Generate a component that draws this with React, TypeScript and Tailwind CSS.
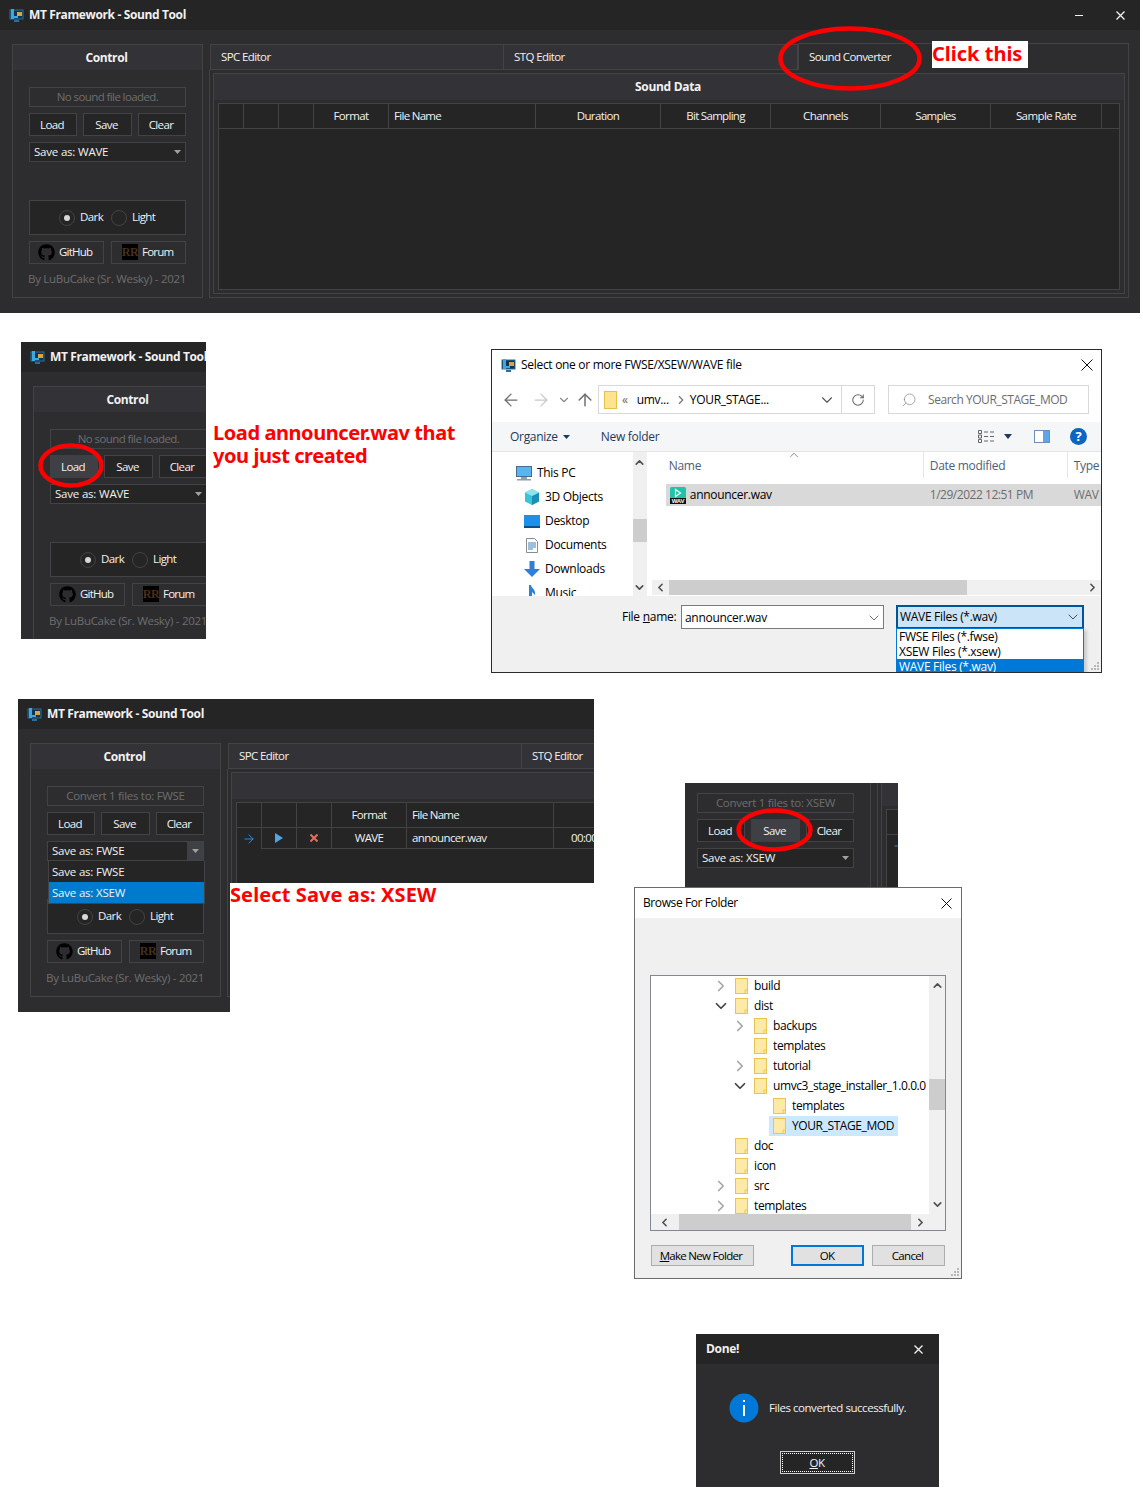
import React from "react";
import { FaGithub } from "react-icons/fa";
import { ArrowLeft, ArrowRight, ArrowUp, ChevronDown, ChevronRight, ChevronUp, ChevronLeft, RotateCw, Search } from "lucide-react";

const Caret = () => (
  <svg width="7" height="4" viewBox="0 0 7 4" className="shrink-0"><path d="M0 0h7L3.5 4z" fill="#a0a0a0" /></svg>
);

const XIcon = ({ s, c = "#f1f1f1", w = 1.3 }: { s: number; c?: string; w?: number }) => (
  <svg width={s} height={s} viewBox={`0 0 ${s} ${s}`} className="shrink-0">
    <path d={`M0.5 0.5L${s - 0.5} ${s - 0.5}M${s - 0.5} 0.5L0.5 ${s - 0.5}`} stroke={c} strokeWidth={w} fill="none" />
  </svg>
);

const AppIcon = ({ size = 15 }: { size?: number }) => (
  <svg width={size} height={size} viewBox="0 0 15 15" className="shrink-0">
    <rect x="1" y="2" width="13" height="9" fill="#16324f" stroke="#2a6f9e" />
    <rect x="2" y="1" width="3" height="10" fill="#3fa7e0" />
    <rect x="4" y="8" width="5" height="2" fill="#3fa7e0" />
    <rect x="8" y="4" width="5" height="4" fill="#d9a441" />
    <rect x="5" y="12" width="5" height="2" fill="#2a6f9e" />
  </svg>
);

const ForumIcon = () => (
  <span className="flex w-[16px] h-[16px] bg-black items-center justify-center text-[12px] leading-none tracking-[-0.5px] font-bold font-['Liberation_Serif',serif] text-[#4a3018] shrink-0">RR</span>
);

function Radio({ on }: { on?: boolean }) {
  return (
    <span className="flex w-[16px] h-[16px] rounded-full border border-[#434346] items-center justify-center shrink-0">
      {on && <span className="block w-[6px] h-[6px] rounded-full bg-[#d8d8d8]" />}
    </span>
  );
}

function Btn({ label, hover, w }: { label: string; hover?: boolean; w: string }) {
  return (
    <div className={`${w} h-[23px] flex items-center justify-center pr-[2px] border ${hover ? "bg-[#3f3f46] border-[#3f3f46]" : "bg-[#252526] border-[#434346]"}`}>{label}</div>
  );
}

type ToolProps = {
  label: string;
  labelCls?: string;
  combo: string;
  hover?: "load" | "save";
  open?: boolean;
  rows?: boolean;
};

const columns = [
  { w: "w-[25px]", t: "", c: "" },
  { w: "w-[35px]", t: "", c: "" },
  { w: "w-[35px]", t: "", c: "" },
  { w: "w-[75px]", t: "Format", c: "justify-center" },
  { w: "w-[147px]", t: "File Name", c: "pl-[5px] tracking-[-0.7px]" },
  { w: "w-[125px]", t: "Duration", c: "justify-center" },
  { w: "w-[110px]", t: "Bit Sampling", c: "justify-center tracking-[-0.7px]" },
  { w: "w-[110px]", t: "Channels", c: "justify-center" },
  { w: "w-[110px]", t: "Samples", c: "justify-center tracking-[-0.7px]" },
  { w: "w-[111px]", t: "Sample Rate", c: "justify-center" },
];

function SoundTool({ label, labelCls = "", combo, hover, open, rows }: ToolProps) {
  return (
    <div className="w-[1140px] h-[313px] bg-[#2d2d30] text-[#f1f1f1] text-[11.5px] leading-none font-['Open_Sans',sans-serif] tracking-[-0.6px] shrink-0">
      <div className="h-[30px] bg-[#252526] flex items-center pl-[9px]">
        <AppIcon />
        <span className="ml-[5px] text-[12px] font-bold tracking-[-0.37px]">MT Framework - Sound Tool</span>
        <div className="ml-auto flex items-center pr-[15px]">
          <span className="block w-[8px] h-[1px] bg-[#f1f1f1] mr-[33px]" />
          <XIcon s={9} />
        </div>
      </div>
      <div className="flex pl-[12px] pt-[14px]">
        <div className="relative w-[191px] h-[254px] border border-[#434346] shrink-0">
          <div className="h-[25px] bg-[#333337] flex items-center justify-center pr-[2px] text-[12px] font-bold tracking-[-0.4px]">Control</div>
          <div className="px-[16px] pt-[17px]">
            <div className={`h-[20px] border border-[#434346] flex items-center justify-center pb-[1px] text-[#6d6d6d] ${labelCls}`}>{label}</div>
            <div className="flex justify-between mt-[6px]">
              <Btn label="Load" w="w-[48px]" hover={hover === "load"} />
              <Btn label="Save" w="w-[49px]" hover={hover === "save"} />
              <Btn label="Clear" w="w-[48px]" />
            </div>
            <div className="h-[20px] mt-[6px] border border-[#434346] bg-[#252526] flex items-center pl-[4px] relative tracking-[-0.2px]">
              {combo}
              <div className={`absolute right-0 top-0 bottom-0 w-[16px] flex items-center justify-center ${open ? "bg-[#3f3f46]" : ""}`}><Caret /></div>
            </div>
            <div className="h-[35px] mt-[38px] border border-[#434346] bg-[#252526] flex items-center pl-[29px]">
              <Radio on />
              <span className="ml-[5px] w-[31px] pb-[1px]">Dark</span>
              <Radio />
              <span className="ml-[5px] pb-[1px]">Light</span>
            </div>
            <div className="flex justify-between mt-[6px]">
              <div className="w-[75px] h-[23px] border border-[#434346] flex items-center pl-[8px] gap-[4px] pb-[1px] tracking-[-0.8px]">
                <FaGithub size={17} color="#000" className="shrink-0" />GitHub
              </div>
              <div className="w-[75px] h-[23px] border border-[#434346] flex items-center pl-[10px] gap-[4px] pb-[1px] tracking-[-0.8px]">
                <ForumIcon />Forum
              </div>
            </div>
            <div className="h-[18px] mt-[6px] flex items-center justify-center pr-[1px] text-[#6d6d6d] whitespace-nowrap tracking-[-0.3px]">By LuBuCake (Sr. Wesky) - 2021</div>
          </div>
          {open && (
            <div className="absolute left-[17px] top-[117px] w-[157px] h-[43px] bg-[#252526] border-x border-b border-[#434346] tracking-[-0.2px]">
              <div className="h-[21px] flex items-center pl-[3px]">Save as: FWSE</div>
              <div className="h-[21px] flex items-center pl-[3px] bg-[#007acc]">Save as: XSEW</div>
            </div>
          )}
        </div>
        <div className="ml-[6px] w-[920px] shrink-0">
          <div className="flex h-[26px] pl-[1px]">
            <div className="w-[294px] bg-[#333337] border border-[#434346] flex items-center pl-[10px]">SPC Editor</div>
            <div className="w-[294px] bg-[#333337] border-y border-r border-[#434346] flex items-center pl-[10px]">STQ Editor</div>
            <div className="w-[331px] -mt-[1px] h-[27px] bg-[#2d2d30] border-x border-t border-[#434346] flex items-center pl-[10px]">Sound Converter</div>
          </div>
          <div className="h-[228px] border-x border-b border-[#434346] px-[3px] pt-[3px]">
            <div className="h-[221px] border border-[#434346] bg-[#2d2d30]">
              <div className="h-[26px] bg-[#333337] flex items-center justify-center pr-[2px] text-[12px] font-bold tracking-[-0.3px]">Sound Data</div>
              <div className="mx-[4px] mt-[3px] h-[187px] border border-[#434346] bg-[#252526]">
                <div className="flex h-[25px] border-b border-[#434346]">
                  {columns.map((c, i) => (
                    <div key={i} className={`${c.w} h-full border-r border-[#434346] flex items-center pb-[1px] ${c.c}`}>{c.t}</div>
                  ))}
                </div>
                {rows && (
                  <div className="flex h-[21px]">
                    <div className="w-[25px] h-full flex items-center justify-center border-r border-[#434346]">
                      <ArrowRight size={14} color="#3a96dd" strokeWidth={1.5} />
                    </div>
                    <div className="w-[35px] h-full flex items-center justify-center border-r border-b border-[#434346]">
                      <svg width="8" height="10" viewBox="0 0 8 10"><path d="M0 0l8 5-8 5z" fill="#4ea6ea" /></svg>
                    </div>
                    <div className="w-[35px] h-full flex items-center justify-center border-r border-b border-[#434346]">
                      <XIcon s={8} c="#e0705a" w={2} />
                    </div>
                    <div className="w-[75px] h-full flex items-center justify-center border-r border-b border-[#434346]">WAVE</div>
                    <div className="w-[147px] h-full flex items-center pl-[5px] border-r border-b border-[#434346]">announcer.wav</div>
                    <div className="w-[125px] h-full flex items-center pl-[17px] border-r border-b border-[#434346]">00:00:05</div>
                  </div>
                )}
              </div>
            </div>
          </div>
        </div>
      </div>
    </div>
  );
}

function Ellipse({ w, h, className }: { w: number; h: number; className: string }) {
  return (
    <svg width={w} height={h} className={`absolute ${className}`}>
      <ellipse cx={w / 2} cy={h / 2} rx={w / 2 - 2.5} ry={h / 2 - 2.5} fill="none" stroke="#ff0000" strokeWidth="4.5" />
    </svg>
  );
}

const noteCls = "font-['Noto_Sans',sans-serif] font-bold text-[#ff0000] text-[20px] leading-[23px]";

const Folder = () => (
  <svg width="13" height="16" viewBox="0 0 13 16" className="shrink-0">
    <rect x="0.5" y="0.5" width="12" height="15" fill="#ffe9a6" stroke="#eac452" />
    <path d="M10 15.5V12h2.5" fill="none" stroke="#eac452" />
  </svg>
);

const tree: { l: 0 | 1 | 2; n: string; c?: "r" | "d"; s?: boolean }[] = [
  { l: 0, n: "build", c: "r" },
  { l: 0, n: "dist", c: "d" },
  { l: 1, n: "backups", c: "r" },
  { l: 1, n: "templates" },
  { l: 1, n: "tutorial", c: "r" },
  { l: 1, n: "umvc3_stage_installer_1.0.0.0", c: "d" },
  { l: 2, n: "templates" },
  { l: 2, n: "YOUR_STAGE_MOD", s: true },
  { l: 0, n: "doc" },
  { l: 0, n: "icon" },
  { l: 0, n: "src", c: "r" },
  { l: 0, n: "templates", c: "r" },
];

const pad = ["pl-[65px]", "pl-[84px]", "pl-[103px]"];

function BrowseDialog() {
  return (
    <div className="absolute left-[634px] top-[887px] w-[328px] h-[392px] bg-[#f0f0f0] border border-[#6b6b6b] text-black text-[12px] leading-none font-['Open_Sans',sans-serif] tracking-[-0.4px]">
      <div className="h-[30px] bg-white flex items-center pl-[8px] pr-[9px] justify-between">
        Browse For Folder
        <XIcon s={11} c="#111" w={1} />
      </div>
      <div className="mx-[15px] mt-[57px] w-[296px] h-[256px] border border-[#828790] bg-white flex flex-col">
        <div className="flex h-[238px]">
          <div className="w-[278px] overflow-hidden">
            {tree.map((r, i) => (
              <div key={i} className={`h-[20px] flex items-center ${pad[r.l]}`}>
                <span className="w-[10px] flex justify-center shrink-0">
                  {r.c === "r" && <ChevronRight size={18} color="#a6a6a6" strokeWidth={2.25} className="shrink-0" />}
                  {r.c === "d" && <ChevronDown size={18} color="#404040" strokeWidth={2.25} className="shrink-0" />}
                </span>
                <span className={`ml-[5px] px-[4px] h-[20px] flex items-center whitespace-nowrap ${r.s ? "bg-[#cce8ff]" : ""}`}>
                  <Folder />
                  <span className="ml-[6px]">{r.n}</span>
                </span>
              </div>
            ))}
          </div>
          <div className="w-[16px] bg-[#f0f0f0] relative flex flex-col items-center justify-between py-[3px]">
            <ChevronUp size={13} color="#505050" strokeWidth={3} />
            <div className="absolute left-0 right-0 top-[103px] h-[31px] bg-[#cdcdcd]" />
            <ChevronDown size={13} color="#505050" strokeWidth={3} />
          </div>
        </div>
        <div className="h-[16px] bg-[#f0f0f0] flex items-center">
          <div className="w-[28px] flex justify-center -ml-[1px]"><ChevronLeft size={13} color="#505050" strokeWidth={3} /></div>
          <div className="w-[232px] h-full bg-[#cdcdcd] ml-[1px]" />
          <div className="w-[18px] flex justify-center"><ChevronRight size={13} color="#505050" strokeWidth={3} /></div>
        </div>
      </div>
      <div className="flex mt-[14px] pl-[16px] text-[11.5px] tracking-[-0.7px]">
        <div className="w-[103px] h-[21px] bg-[#e1e1e1] border border-[#adadad] flex items-center justify-center pr-[3px]"><span className="underline">M</span>ake New Folder</div>
        <div className="ml-[37px] w-[73px] h-[21px] bg-[#e1e1e1] border-2 border-[#0078d7] flex items-center justify-center pr-[1px]">OK</div>
        <div className="ml-[8px] w-[73px] h-[21px] bg-[#e1e1e1] border border-[#adadad] flex items-center justify-center pr-[2px]">Cancel</div>
      </div>
      <Grip />
    </div>
  );
}

const Grip = () => (
  <svg width="10" height="9" viewBox="0 0 10 9" className="absolute right-[1px] bottom-[1px]">
    <g fill="#b8b8b8"><rect x="7" y="0" width="2" height="2" /><rect x="4" y="3" width="2" height="2" /><rect x="7" y="3" width="2" height="2" /><rect x="1" y="6" width="2" height="2" /><rect x="4" y="6" width="2" height="2" /><rect x="7" y="6" width="2" height="2" /></g>
  </svg>
);

function DoneDialog() {
  return (
    <div className="absolute left-[696px] top-[1334px] w-[243px] h-[153px] bg-[#2d2d30] text-[#f1f1f1] text-[11.5px] leading-none font-['Open_Sans',sans-serif] tracking-[-0.45px]">
      <div className="h-[30px] bg-[#252526] flex items-center justify-between pl-[10px] pr-[16px]">
        <span className="text-[12px] font-bold tracking-[-0.3px]">Done!</span>
        <XIcon s={9} />
      </div>
      <div className="flex items-center h-[29px] mt-[29px] pl-[33px]">
        <svg width="30" height="30" viewBox="0 0 30 30" className="shrink-0">
          <circle cx="15" cy="15" r="14.5" fill="#0078d7" />
          <rect x="14" y="12" width="2" height="11" fill="#fff" />
          <rect x="14" y="7" width="2" height="2" fill="#fff" />
        </svg>
        <span className="ml-[10px] whitespace-nowrap">Files converted successfully.</span>
      </div>
      <div className="mt-[29px] ml-[84px] w-[75px] h-[23px] bg-[#252526] border border-[#d0d0d0] p-[1px]">
        <div className="w-full h-full border border-dotted border-white flex items-center justify-center pr-[1px] pt-[1px]"><span className="underline">O</span>K</div>
      </div>
    </div>
  );
}

function FileDialog() {
  const nav = [
    { n: "3D Objects", i: <svg width="16" height="16" viewBox="0 0 16 16"><path d="M8 0l7 3.5v9L8 16l-7-3.5v-9z" fill="#3bc3d8" /><path d="M8 7l7-3.5v9L8 16z" fill="#1a8fb8" /><path d="M1 3.5L8 7l7-3.5L8 0z" fill="#8de4ee" /></svg> },
    { n: "Desktop", i: <svg width="16" height="13" viewBox="0 0 16 13"><rect width="16" height="13" fill="#1e90e8" /><path d="M0 11h16v2H0z" fill="#0b4f8a" /></svg> },
    { n: "Documents", i: <svg width="12" height="15" viewBox="0 0 12 15"><path d="M.5.5h8l3 3v11H.5z" fill="#fff" stroke="#8a8a8a" /><path d="M2 5h8M2 7h8M2 9h8M2 11h5" stroke="#3d7ebf" /></svg> },
    { n: "Downloads", i: <svg width="16" height="16" viewBox="0 0 16 16"><path d="M5.5 0h5v8H16l-8 8-8-8h5.5z" fill="#2f7fd8" /></svg> },
    { n: "Music", i: <svg width="16" height="16" viewBox="0 0 16 16"><path d="M5 0h2c0 3 5 4 4 10l-3-3v7H5z" fill="#2f7fd8" /></svg> },
  ];
  return (
    <div className="absolute left-[491px] top-[349px] w-[611px] h-[324px] bg-white border border-[#2b2b2b] text-black text-[12px] leading-none font-['Open_Sans',sans-serif] tracking-[-0.3px] overflow-hidden">
      <div className="h-[30px] flex items-center pl-[9px] pr-[8px]">
        <AppIcon size={15} />
        <span className="ml-[5px]">Select one or more FWSE/XSEW/WAVE file</span>
        <span className="ml-auto"><XIcon s={12} c="#111" w={1} /></span>
      </div>
      <div className="h-[42px] flex items-center pl-[9px] pt-[5px] pb-[8px]">
        <ArrowLeft size={20} color="#6b6b6b" strokeWidth={1.5} />
        <ArrowRight size={20} color="#c8c8c8" strokeWidth={1.5} className="ml-[10px]" />
        <ChevronDown size={14} color="#8a8a8a" strokeWidth={2} className="ml-[6px]" />
        <ArrowUp size={20} color="#6b6b6b" strokeWidth={1.75} className="ml-[4px]" />
        <div className="ml-[3px] w-[277px] h-[29px] border border-[#d9d9d9] flex items-center pl-[5px]">
          <svg width="13" height="18" viewBox="0 0 13 18" className="shrink-0"><rect x=".5" y=".5" width="12" height="17" fill="#ffe38f" stroke="#e6bf4c" /></svg>
          <span className="ml-[5px] text-[#666]">«</span>
          <span className="ml-[9px]">umv...</span>
          <ChevronRight size={14} color="#777" className="ml-[5px]" />
          <span className="ml-[2px]">YOUR_STAGE...</span>
          <ChevronDown size={18} color="#555" strokeWidth={1.5} className="ml-auto mr-[5px]" />
          <div className="w-[33px] h-full border-l border-[#d9d9d9] flex items-center justify-center">
            <RotateCw size={14} color="#666" strokeWidth={1.75} />
          </div>
        </div>
        <div className="ml-[13px] w-[201px] h-[29px] border border-[#d9d9d9] flex items-center pl-[12px] text-[#6d6d6d] tracking-[-0.45px]">
          <Search size={16} color="#8a8a8a" strokeWidth={1.1} className="-scale-x-100" />
          <span className="ml-[11px]">Search YOUR_STAGE_MOD</span>
        </div>
      </div>
      <div className="h-[30px] bg-[#f5f6f7] border-b border-[#e5e5e5] flex items-center pl-[18px] pr-[14px] text-[#1e395b]">
        <span>Organize</span>
        <svg width="7" height="4" viewBox="0 0 7 4" className="ml-[5px]"><path d="M0 0h7L3.5 4z" fill="#1e395b" /></svg>
        <span className="ml-[31px]">New folder</span>
        <svg width="16" height="13" viewBox="0 0 16 13" className="ml-auto"><g fill="none" stroke="#666"><path d="M.5.5h3v3h-3zM.5 5h3v3h-3zM.5 9.5h3v3h-3z" /><path d="M6 2h4M12 2h4M6 6.5h4M12 6.5h4M6 11h4M12 11h4" /></g></svg>
        <svg width="8" height="5" viewBox="0 0 8 5" className="ml-[10px]"><path d="M0 0h8L4 5z" fill="#1e395b" /></svg>
        <svg width="16" height="13" viewBox="0 0 16 13" className="ml-[22px]"><rect x=".5" y=".5" width="15" height="12" fill="#fff" stroke="#6c8fb5" /><rect x="9" y="1" width="6" height="11" fill="#5ea6e6" /></svg>
        <span className="ml-[20px] w-[17px] h-[17px] rounded-full bg-[#0a66c2] text-white font-bold text-[13px] flex items-center justify-center">?</span>
      </div>
      <div className="h-[144px] flex">
        <div className="w-[141px] overflow-hidden pt-[9px] pl-[24px]">
          <div className="h-[24px] flex items-center">
            <svg width="16" height="15" viewBox="0 0 16 15" className="shrink-0"><rect x=".5" y=".5" width="15" height="10" fill="#59b4f0" stroke="#4a6c8a" /><rect x="5" y="11" width="6" height="2" fill="#8aa0b4" /><rect x="1" y="13" width="14" height="1.5" fill="#8aa0b4" /></svg>
            <span className="ml-[5px]">This PC</span>
          </div>
          {nav.map((it) => (
            <div key={it.n} className="h-[24px] flex items-center -mr-[4px] pl-[8px]">
              <span className="w-[16px] flex justify-center shrink-0">{it.i}</span>
              <span className="ml-[5px]">{it.n}</span>
            </div>
          ))}
        </div>
        <div className="w-[14px] bg-[#f0f0f0] relative flex flex-col items-center justify-between pt-[4px] pb-[2px]">
          <ChevronUp size={13} color="#505050" strokeWidth={3} />
          <div className="absolute left-0 right-0 top-[67px] h-[23px] bg-[#cdcdcd]" />
          <ChevronDown size={13} color="#505050" strokeWidth={3} />
        </div>
        <div className="ml-[5px] w-[450px] flex flex-col relative">
          <div className="h-[26px] flex text-[#4c607a]">
            <div className="w-[272px] border-r border-[#e5e5e5] flex items-center pl-[17px] pt-[1px] relative">
              Name
              <ChevronUp size={14} color="#777" strokeWidth={1.5} className="absolute left-[135px] -top-[4px]" />
            </div>
            <div className="w-[144px] border-r border-[#e5e5e5] flex items-center pl-[6px] pt-[1px]">Date modified</div>
            <div className="flex items-center pl-[6px] pt-[1px]">Type</div>
          </div>
          <div className="mt-[6px] ml-[14px] h-[22px] bg-[#d9d9d9] flex items-center pl-[4px]">
            <svg width="16" height="17" viewBox="0 0 16 17" className="shrink-0"><rect width="16" height="13" rx="1.5" fill="#20c4a8" /><path d="M5.5 2.5l5 3.5-5 3.5z" fill="none" stroke="#fff" strokeWidth="1.2" /><rect y="11" width="16" height="6" fill="#111" /><text x="8" y="16" textAnchor="middle" fontSize="6" fontWeight="700" fill="#fff" fontFamily="Liberation Sans, sans-serif">WAV</text></svg>
            <span className="ml-[4px] w-[240px]">announcer.wav</span>
            <span className="w-[144px] text-[#6d6d6d] tracking-[-0.47px]">1/29/2022 12:51 PM</span>
            <span className="text-[#6d6d6d]">WAV</span>
          </div>
          <div className="flex-1" />
          <div className="mb-[1px] h-[15px] bg-[#f0f0f0] flex items-center">
            <div className="w-[17px] flex justify-center"><ChevronLeft size={13} color="#505050" strokeWidth={3} /></div>
            <div className="w-[298px] h-full bg-[#cdcdcd]" />
            <div className="ml-auto w-[16px] flex justify-center"><ChevronRight size={13} color="#505050" strokeWidth={3} /></div>
          </div>
        </div>
      </div>
      <div className="h-[76px] bg-[#f0f0f0] relative flex pt-[9px] pl-[130px]">
        <div className="w-[59px] h-[24px] flex items-center whitespace-nowrap">File <span className="underline ml-[3px]">n</span>ame:</div>
        <div className="w-[203px] h-[24px] bg-white border border-[#7a7a7a] flex items-center pl-[3px] pt-[1px] justify-between pr-[1px]">
          announcer.wav
          <ChevronDown size={16} color="#555" strokeWidth={1.3} />
        </div>
        <div className="ml-[12px] w-[188px] h-[24px] bg-[#cce4f7] border-2 border-[#005499] flex items-center pl-[2px] justify-between pr-[1px]">
          WAVE Files (*.wav)
          <ChevronDown size={16} color="#333" strokeWidth={1.3} />
        </div>
        <div className="absolute left-[404px] top-[32px] w-[188px] h-[46px] bg-white border border-[#0078d7] shadow-[3px_2px_3px_rgba(0,0,0,0.15)]">
          <div className="h-[15px] flex items-center pl-[2px]">FWSE Files (*.fwse)</div>
          <div className="h-[15px] flex items-center pl-[2px]">XSEW Files (*.xsew)</div>
          <div className="h-[15px] flex items-center pl-[2px] bg-[#0078d7] text-white">WAVE Files (*.wav)</div>
        </div>
        <Grip />
      </div>
    </div>
  );
}

export default function App() {
  return (
    <div className="relative w-[1143px] h-[1502px] bg-white overflow-hidden">
      {/* Step 1 */}
      <div className="absolute left-0 top-0 w-[1140px] h-[313px] overflow-hidden">
        <SoundTool label="No sound file loaded." combo="Save as: WAVE" />
      </div>
      <Ellipse w={144} h={65} className="left-[778px] top-[26px]" />
      <div className={`absolute left-[932px] top-[41px] w-[96px] h-[27px] bg-white flex items-center pb-[2px] ${noteCls}`}>Click this</div>

      {/* Step 2 */}
      <div className="absolute left-[21px] top-[342px] w-[185px] h-[297px] overflow-hidden">
        <SoundTool label="No sound file loaded." combo="Save as: WAVE" hover="load" />
      </div>
      <Ellipse w={66} h={45} className="left-[38px] top-[443px]" />
      <div className={`absolute left-[213px] top-[421px] tracking-[-0.42px] ${noteCls}`}>Load announcer.wav that<br />you just created</div>
      <FileDialog />

      {/* Step 3 */}
      <div className="absolute left-[18px] top-[699px] w-[576px] h-[313px] overflow-hidden">
        <SoundTool label="Convert 1 files to: FWSE" labelCls="tracking-[-0.3px]" combo="Save as: FWSE" open rows />
      </div>
      <div className="absolute left-[230px] top-[883px] w-[364px] h-[129px] bg-white">
        <div className={`tracking-[0.1px] ${noteCls}`}>Select Save as: XSEW</div>
      </div>

      {/* Step 4 */}
      <div className="absolute left-[685px] top-[783px] w-[213px] h-[104px] overflow-hidden">
        <div className="-ml-[17px] -mt-[77px]">
          <SoundTool label="Convert 1 files to: XSEW" labelCls="tracking-[-0.3px]" combo="Save as: XSEW" hover="save" rows />
        </div>
      </div>
      <Ellipse w={77} h={44} className="left-[736px] top-[808px]" />
      <BrowseDialog />
      <DoneDialog />
    </div>
  );
}
